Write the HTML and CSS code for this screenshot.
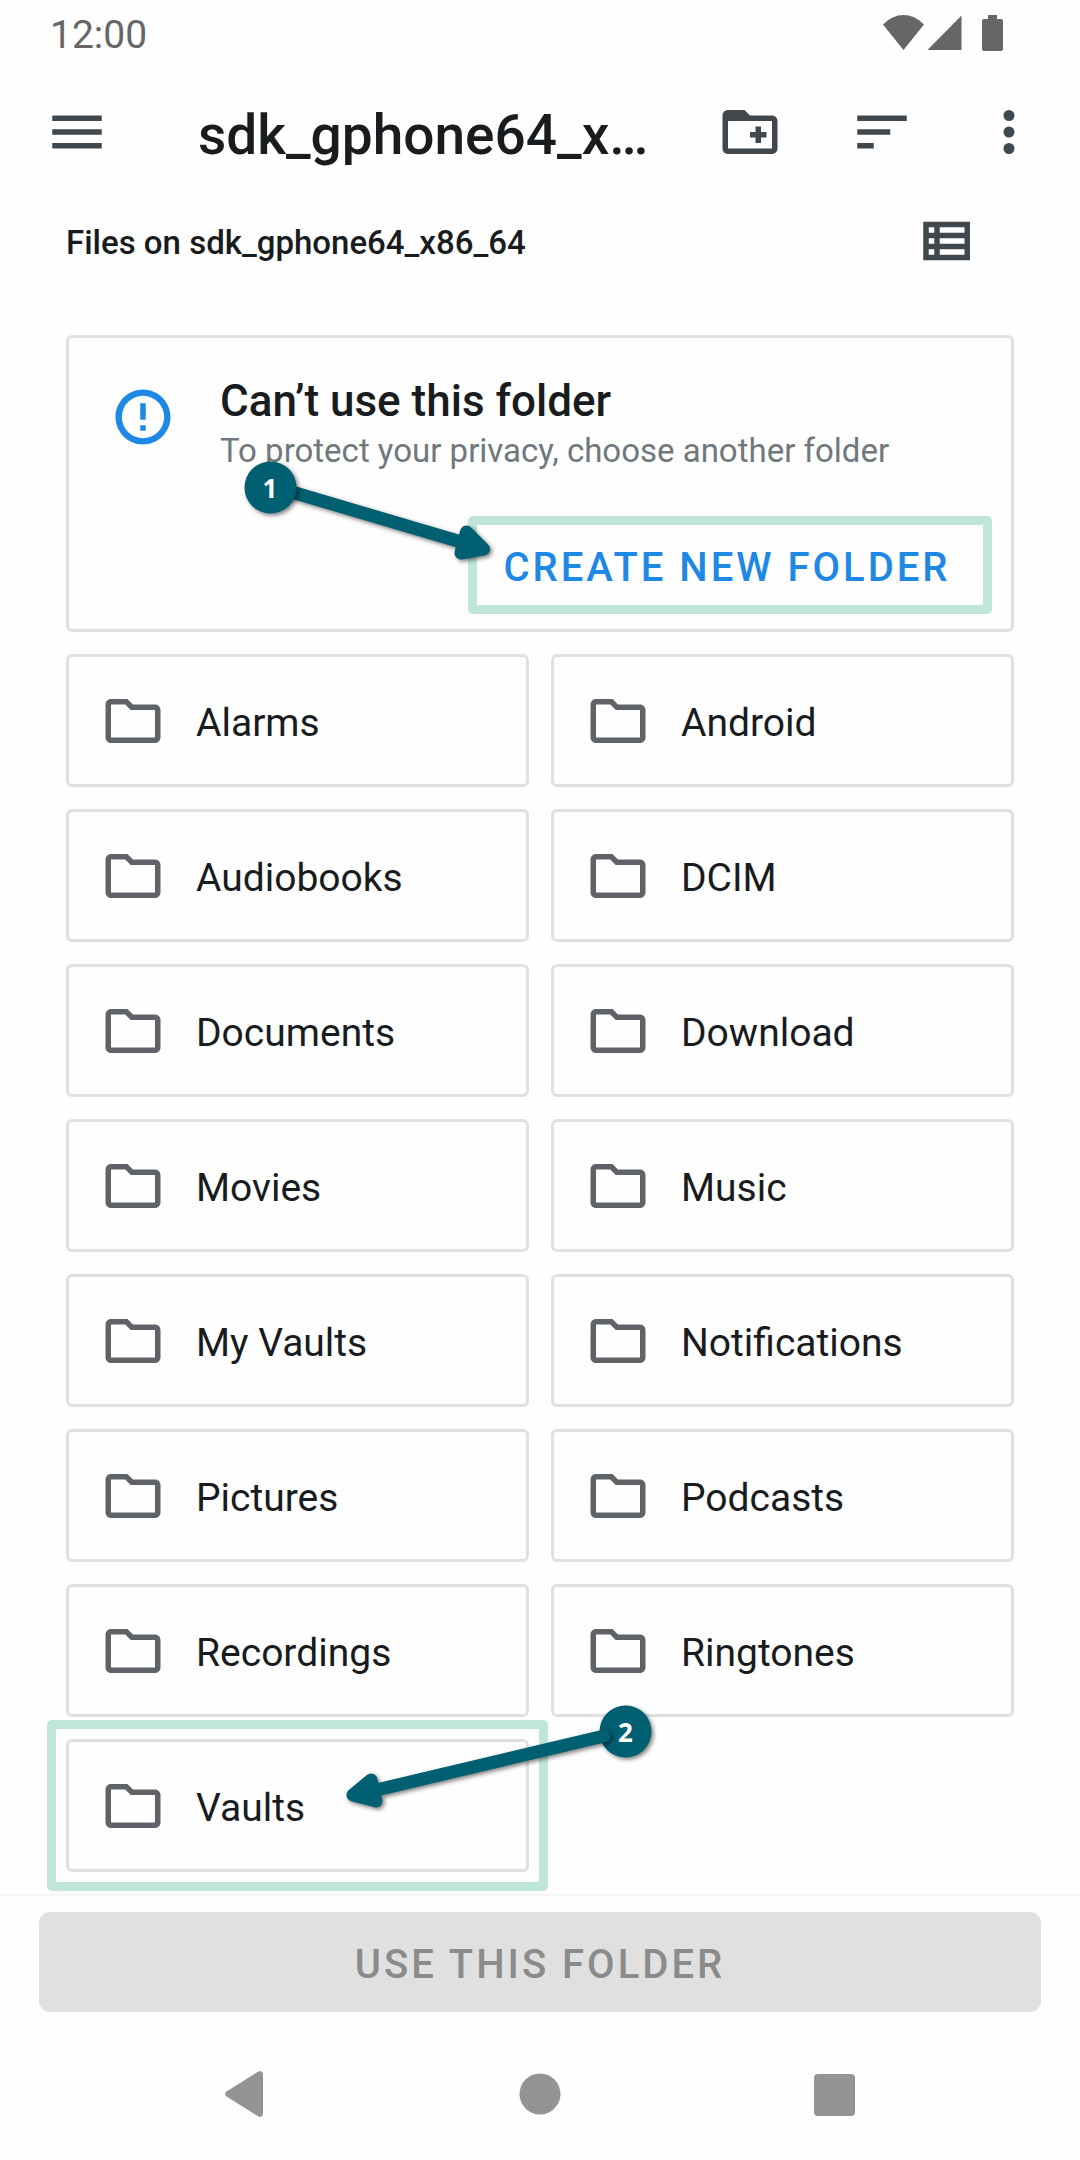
FILE: index.html
```html
<!DOCTYPE html>
<html lang="en">
<head>
<meta charset="utf-8">
<meta name="viewport" content="width=device-width, initial-scale=1">
<title>Choose a folder</title>
<link rel="stylesheet" href="styles.css">
</head>
<body>
<svg class="sprite" aria-hidden="true">
  <symbol id="folder" viewBox="0 0 24 24"><path d="M9.17 6l2 2H20v10H4V6h5.17M10 4H4c-1.1 0-1.99.9-1.99 2L2 18c0 1.1.9 2 2 2h16c1.1 0 2-.9 2-2V8c0-1.1-.9-2-2-2h-8l-2-2z"/></symbol>
</svg>

<div class="status-bar">
  <span class="clock">12:00</span>
  <svg class="status-icons" viewBox="0 0 120 36" aria-hidden="true">
    <path d="M0 9.500Q9 0 20.500 0T41 9.500L20.500 35z"/>
    <path d="M44.500 35L78.500 .5V35z"/>
    <path d="M105 0h9v4h4a2 2 0 0 1 2 2v28a2 2 0 0 1-2 2h-17a2 2 0 0 1-2-2V6a2 2 0 0 1 2-2h4z"/>
  </svg>
</div>

<header class="app-bar">
  <button class="icon-button menu-button" type="button" aria-label="Open menu">
    <svg class="icon" viewBox="0 0 24 24"><path d="M3 6h18v2H3zM3 11h18v2H3zM3 16h18v2H3z"/></svg>
  </button>
  <h1 class="app-title">sdk_gphone64_x86_64</h1>
  <button class="icon-button" type="button" aria-label="New folder">
    <svg class="icon" viewBox="0 0 24 24"><path d="M20 6h-8l-2-2H4c-1.110 0-2 .9-2 2v12c0 1.100.9 2 2 2h16c1.100 0 2-.9 2-2V8c0-1.100-.9-2-2-2zm0 12H4V8h16v10zM14 16h2v-2h2v-2h-2v-2h-2v2h-2v2h2z"/></svg>
  </button>
  <button class="icon-button" type="button" aria-label="Sort by">
    <svg class="icon" viewBox="0 0 24 24"><path d="M3 6h18v2H3zM3 11h12v2H3zM3 16h6v2H3z"/></svg>
  </button>
  <button class="icon-button more-button" type="button" aria-label="More options">
    <svg class="icon" viewBox="0 0 24 24"><circle cx="12" cy="6" r="2"/><circle cx="12" cy="12" r="2"/><circle cx="12" cy="18" r="2"/></svg>
  </button>
</header>

<div class="sub-bar">
  <h2 class="sub-title">Files on sdk_gphone64_x86_64</h2>
  <button class="icon-button view-button" type="button" aria-label="List view">
    <svg class="icon" viewBox="0 0 24 24"><path fill-rule="evenodd" d="M3 5h17v14H3zM5 7v2h2V7zM5 11v2h2v-2zM5 15v2h2v-2zM9 7v2h9V7zM9 11v2h9v-2zM9 15v2h9v-2z"/></svg>
  </button>
</div>

<main class="content">
  <section class="notice">
    <svg class="icon notice-icon" viewBox="0 0 24 24" aria-hidden="true"><path d="M11 15h2v2h-2zm0-8h2v6h-2zm1-5C6.480 2 2 6.480 2 12s4.480 10 10 10 10-4.480 10-10S17.520 2 12 2zm0 17.700a7.700 7.700 0 1 1 0-15.400 7.700 7.700 0 0 1 0 15.400z"/></svg>
    <div class="notice-text">
      <h3 class="notice-title">Can’t use this folder</h3>
      <p class="notice-body">To protect your privacy, choose another folder</p>
    </div>
    <div class="notice-action">
      <button class="create-button" type="button">CREATE NEW FOLDER</button>
      <svg class="callout callout-one" viewBox="236 452 272 120" aria-hidden="true">
        <g class="arrow">
          <path class="shaft" d="M285 490L468 544"/>
          <path class="head" d="M466.500 532L461 553L483.500 549z"/>
        </g>
        <circle class="badge" cx="270.500" cy="487.500" r="26"/>
        <text class="badge-text" x="270" y="498">1</text>
      </svg>
    </div>
  </section>

  <ul class="folders">
    <li><a class="folder" href="#"><svg class="icon"><use href="#folder"/></svg><span>Alarms</span></a></li>
    <li><a class="folder" href="#"><svg class="icon"><use href="#folder"/></svg><span>Android</span></a></li>
    <li><a class="folder" href="#"><svg class="icon"><use href="#folder"/></svg><span>Audiobooks</span></a></li>
    <li><a class="folder" href="#"><svg class="icon"><use href="#folder"/></svg><span>DCIM</span></a></li>
    <li><a class="folder" href="#"><svg class="icon"><use href="#folder"/></svg><span>Documents</span></a></li>
    <li><a class="folder" href="#"><svg class="icon"><use href="#folder"/></svg><span>Download</span></a></li>
    <li><a class="folder" href="#"><svg class="icon"><use href="#folder"/></svg><span>Movies</span></a></li>
    <li><a class="folder" href="#"><svg class="icon"><use href="#folder"/></svg><span>Music</span></a></li>
    <li><a class="folder" href="#"><svg class="icon"><use href="#folder"/></svg><span>My Vaults</span></a></li>
    <li><a class="folder" href="#"><svg class="icon"><use href="#folder"/></svg><span>Notifications</span></a></li>
    <li><a class="folder" href="#"><svg class="icon"><use href="#folder"/></svg><span>Pictures</span></a></li>
    <li><a class="folder" href="#"><svg class="icon"><use href="#folder"/></svg><span>Podcasts</span></a></li>
    <li><a class="folder" href="#"><svg class="icon"><use href="#folder"/></svg><span>Recordings</span></a></li>
    <li><a class="folder" href="#"><svg class="icon"><use href="#folder"/></svg><span>Ringtones</span></a></li>
    <li>
      <a class="folder folder-marked" href="#"><svg class="icon"><use href="#folder"/></svg><span>Vaults</span>
        <svg class="callout callout-two" viewBox="336 1696 330 124" aria-hidden="true">
          <circle class="badge" cx="625.500" cy="1731.500" r="26"/>
          <g class="arrow">
            <path class="shaft" d="M604 1736L372 1791"/>
            <path class="head" d="M371 1780L376 1801L353 1795z"/>
          </g>
          <text class="badge-text" x="625.500" y="1742">2</text>
        </svg>
      </a>
    </li>
  </ul>
</main>

<footer class="footer">
  <button class="use-button" type="button" disabled>USE THIS FOLDER</button>
</footer>

<nav class="system-nav" aria-label="System">
  <button class="nav-button" type="button" aria-label="Back"><svg class="nav-icon" viewBox="0 0 66 66"><path d="M50 13v40a3 3 0 0 1-4.500 2.500L13.500 35.500a3 3 0 0 1 0-5L45.500 10.500A3 3 0 0 1 50 13z"/></svg></button>
  <button class="nav-button" type="button" aria-label="Home"><svg class="nav-icon" viewBox="0 0 66 66"><circle cx="33" cy="33" r="20.500"/></svg></button>
  <button class="nav-button" type="button" aria-label="Recent apps"><svg class="nav-icon" viewBox="0 0 66 66"><rect x="13" y="13" width="41" height="42" rx="4"/></svg></button>
</nav>
</body>
</html>
```

FILE: styles.css
```css
* {
  box-sizing: border-box;
}

body {
  margin: 0;
  min-height: 100vh;
  display: flex;
  flex-direction: column;
  background: #fefefe;
  color: #191c1e;
  font-family: Roboto, "Liberation Sans", sans-serif;
  font-size: 39px;
}

h1, h2, h3, p, ul {
  margin: 0;
  padding: 0;
  font-weight: 500;
}

button {
  padding: 0;
  border: 0;
  background: none;
  font: inherit;
}

.sprite {
  position: absolute;
  width: 0;
  height: 0;
}

.icon {
  display: block;
  flex: none;
  width: 66px;
  height: 66px;
  fill: currentColor;
}

/* Status bar */
.status-bar {
  height: 66px;
  padding: 0 77px 0 50px;
  display: flex;
  align-items: center;
  justify-content: space-between;
  color: #666;
}

.clock {
  padding-top: 4px;
}

.status-icons {
  width: 120px;
  height: 36px;
  fill: currentColor;
}

/* App bar */
.app-bar {
  height: 132px;
  padding-right: 10px;
  display: flex;
  align-items: center;
}

.icon-button {
  flex: none;
  width: 132px;
  height: 132px;
  display: flex;
  align-items: center;
  justify-content: center;
  color: #41484d;
}

.menu-button {
  width: 154px;
}

.more-button {
  width: 122px;
}

.app-title {
  flex: 1;
  min-width: 0;
  margin: 0 12px 0 44px;
  padding-top: 6px;
  overflow: hidden;
  text-overflow: ellipsis;
  white-space: nowrap;
  font-size: 55px;
}

.sub-bar {
  height: 86px;
  padding: 0 66px;
  display: flex;
  align-items: center;
  justify-content: space-between;
}

.sub-title {
  padding-top: 2px;
  font-size: 33px;
}

.view-button {
  height: 86px;
}

/* Content */
.content {
  flex: 1;
  padding: 51px 66px 24px;
  display: flex;
  flex-direction: column;
  gap: 22px;
}

.notice {
  padding: 35px 19px 15px 41px;
  display: grid;
  grid-template-columns: 66px 1fr;
  column-gap: 44px;
  row-gap: 43px;
  border: 3px solid #e0e0e0;
  border-radius: 6px;
}

.notice-icon {
  margin-top: 11px;
  color: #1e88e5;
}

.notice-title {
  font-size: 44px;
  line-height: 56px;
}

.notice-body {
  color: #70787d;
  font-size: 33px;
  font-weight: 400;
  line-height: 44px;
}

.notice-action {
  position: relative;
  grid-column: 1 / -1;
  justify-self: end;
}

.create-button {
  display: block;
  width: 524px;
  height: 98px;
  padding: 4px 6px 0 0;
  border: 9px solid #bfe6d9;
  border-radius: 5px;
  color: #1e88e5;
  font-size: 40px;
  font-weight: 500;
  letter-spacing: 3px;
}

.folders {
  display: grid;
  grid-template-columns: 1fr 1fr;
  gap: 22px;
  list-style: none;
}

.folder {
  position: relative;
  height: 133px;
  padding: 0 31px;
  display: flex;
  align-items: center;
  gap: 30px;
  border: 3px solid #e0e0e0;
  border-radius: 6px;
  color: #191c1e;
  font-weight: 400;
  text-decoration: none;
}

.folder .icon {
  color: #5f6368;
}

.folder span {
  padding-top: 4px;
}

.folder-marked::after {
  content: "";
  position: absolute;
  inset: -22px;
  border: 9px solid #bfe6d9;
  border-radius: 5px;
}

/* Numbered callouts */
.callout {
  position: absolute;
  z-index: 1;
  overflow: visible;
  pointer-events: none;
}

.callout-one {
  left: -232px;
  top: -64px;
  width: 272px;
  height: 120px;
}

.callout-two {
  left: 267px;
  top: -46px;
  width: 330px;
  height: 124px;
}

.badge {
  fill: #005f71;
}

.badge,
.arrow {
  filter: drop-shadow(2px 2px 2px rgba(0, 0, 0, 0.5));
}

.shaft,
.head {
  fill: #005f71;
  stroke: #005f71;
  stroke-width: 13px;
  stroke-linecap: round;
  stroke-linejoin: round;
}

.badge-text {
  fill: #fff;
  font-family: "Open Sans", sans-serif;
  font-size: 26px;
  font-weight: 700;
  text-anchor: middle;
}

/* Footer */
.footer {
  padding: 16px 39px 0;
  box-shadow: 0 -1px 4px rgba(0, 0, 0, 0.06);
  clip-path: inset(-8px 0 0 0);
}

.use-button {
  width: 100%;
  height: 100px;
  padding-top: 4px;
  border-radius: 11px;
  background: #e0e0e0;
  color: #8b8b8b;
  font-size: 40px;
  font-weight: 500;
  letter-spacing: 3px;
}

.system-nav {
  height: 148px;
  padding: 16px 99px 0;
  display: grid;
  grid-template-columns: repeat(3, 1fr);
}

.nav-button {
  display: flex;
  align-items: center;
  justify-content: center;
}

.nav-icon {
  width: 66px;
  height: 66px;
  fill: #949494;
}
```
